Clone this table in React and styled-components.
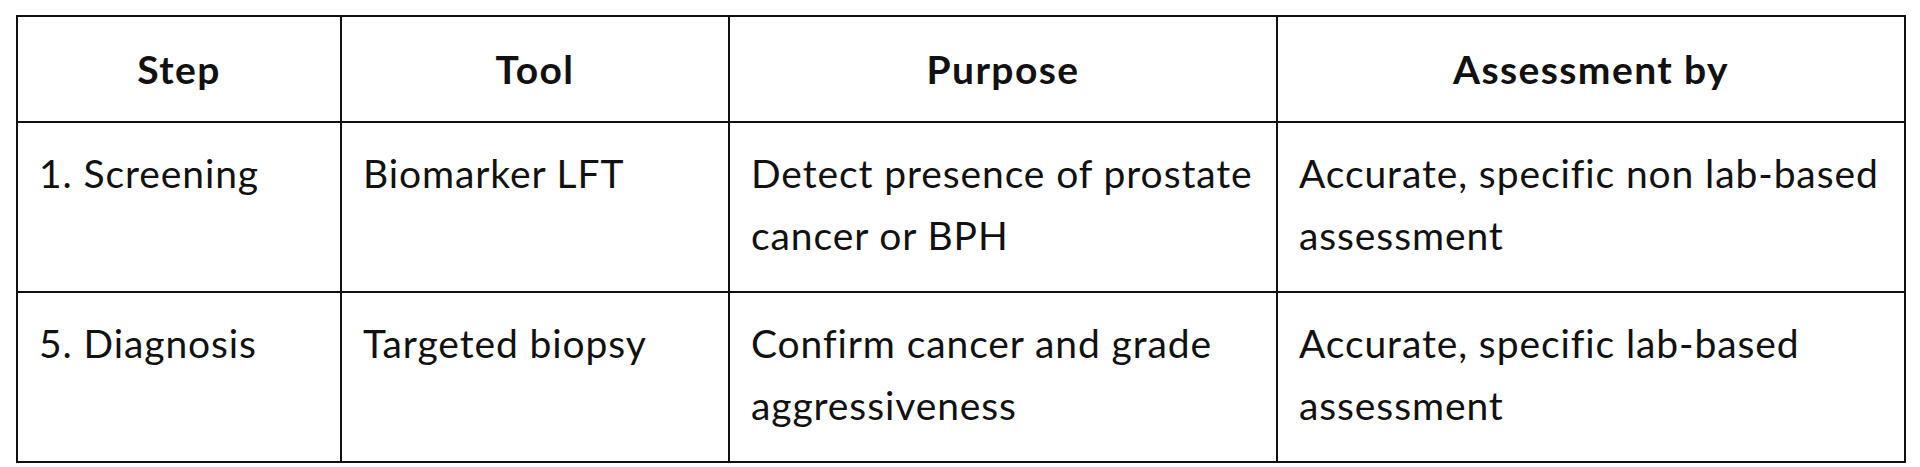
import React from "react";
import styled, { createGlobalStyle } from "styled-components";

const GlobalStyle = createGlobalStyle`
  html, body {
    margin: 0;
    padding: 0;
    background: #fff;
  }
`;

const Page = styled.div`
  width: 1920px;
  height: 467px;
  padding: 15px 16px 0 16px;
  box-sizing: border-box;
  background: #fff;
  font-family: "Lato", "Open Sans", sans-serif;
  color: #111;
`;

const Table = styled.table`
  width: 1888px;
  border-collapse: collapse;
  table-layout: fixed;
`;

const Head = styled.th`
  height: 104px;
  padding: 0;
  border: 2px solid #111;
  font-size: 39px;
  font-weight: 700;
  letter-spacing: 1.4px;
  text-align: center;
  vertical-align: middle;
  line-height: 1;
`;

const Cell = styled.td`
  height: ${(p) => p.$h}px;
  padding: 19px 16px 0 21px;
  border: 2px solid #111;
  font-size: 39px;
  font-weight: 400;
  letter-spacing: 0.9px;
  line-height: 62px;
  text-align: left;
  vertical-align: top;
  box-sizing: border-box;
`;

const columns = [
  { label: "Step", width: 324 },
  { label: "Tool", width: 388 },
  { label: "Purpose", width: 548 },
  { label: "Assessment by", width: 628 },
];

const rows = [
  {
    h: 170,
    cells: [
      "1. Screening",
      "Biomarker LFT",
      "Detect presence of prostate cancer or BPH",
      "Accurate, specific non lab-based assessment",
    ],
  },
  {
    h: 170,
    cells: [
      "5. Diagnosis",
      "Targeted biopsy",
      "Confirm cancer and grade aggressiveness",
      "Accurate, specific lab-based assessment",
    ],
  },
];

export default function App() {
  return (
    <Page>
      <GlobalStyle />
      <Table>
        <colgroup>
          {columns.map((c) => (
            <col key={c.label} style={{ width: c.width }} />
          ))}
        </colgroup>
        <thead>
          <tr>
            {columns.map((c) => (
              <Head key={c.label}>{c.label}</Head>
            ))}
          </tr>
        </thead>
        <tbody>
          {rows.map((r, i) => (
            <tr key={i}>
              {r.cells.map((text, j) => (
                <Cell key={j} $h={r.h}>
                  {text}
                </Cell>
              ))}
            </tr>
          ))}
        </tbody>
      </Table>
    </Page>
  );
}
